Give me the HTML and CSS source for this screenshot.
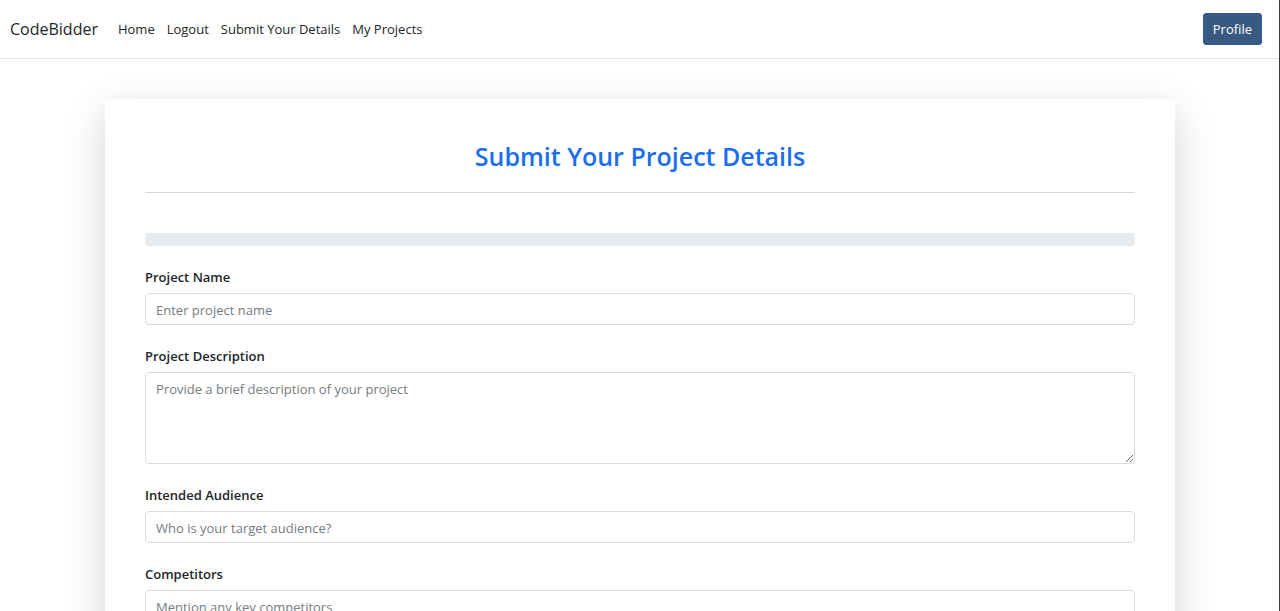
FILE: index.html
```html
<!DOCTYPE html>
<html lang="en">
<head>
<meta charset="utf-8">
<meta name="viewport" content="width=device-width, initial-scale=1">
<title>CodeBidder - Submit Your Project Details</title>
<link rel="stylesheet" href="styles.css">
</head>
<body>
<header class="navbar">
  <a class="brand" href="#">CodeBidder</a>
  <nav class="nav-links">
    <a href="#">Home</a>
    <a href="#">Logout</a>
    <a href="#">Submit Your Details</a>
    <a href="#">My Projects</a>
  </nav>
  <button class="profile-button" type="button">Profile</button>
</header>
<main class="page">
  <section class="card">
    <h1 class="title">Submit Your Project Details</h1>
    <div class="progress" role="progressbar" aria-label="Form progress" aria-valuenow="0" aria-valuemin="0" aria-valuemax="100"></div>
    <form class="form">
      <div class="field">
        <label for="name">Project Name</label>
        <input class="control" id="name" type="text" placeholder="Enter project name">
      </div>
      <div class="field">
        <label for="description">Project Description</label>
        <textarea class="control control-area" id="description" rows="4" placeholder="Provide a brief description of your project"></textarea>
      </div>
      <div class="field">
        <label for="audience">Intended Audience</label>
        <input class="control" id="audience" type="text" placeholder="Who is your target audience?">
      </div>
      <div class="field">
        <label for="competitors">Competitors</label>
        <input class="control" id="competitors" type="text" placeholder="Mention any key competitors">
      </div>
    </form>
  </section>
</main>
</body>
</html>
```
FILE: styles.css
```css
* { box-sizing: border-box; }

html { scrollbar-width: none; }

body {
  margin: 0;
  background: #fff;
  border-right: 1px solid #3c4043;
  color: #212529;
  font-family: "Segoe UI", "Open Sans", "Noto Sans", sans-serif;
  font-size: 13px;
  line-height: 20px;
}

.navbar {
  display: flex;
  align-items: center;
  gap: 20px;
  padding: 13px 17px 13px 10px;
  border-bottom: 1px solid #e4e5e6;
}

.navbar a { color: #212529; text-decoration: none; }

.navbar .brand { font-size: 16px; line-height: 24px; }

.nav-links { display: flex; gap: 12px; }

.profile-button {
  margin-left: auto;
  padding: 5px 9px;
  border: 1px solid #2a5caa;
  border-radius: 3px;
  background: #395a80;
  color: #fff;
  font: inherit;
}

.page { padding: 40px 104px 40px 105px; }

.card {
  padding: 40px;
  border-radius: 4px;
  background: #fff;
  box-shadow: 0 13px 40px rgba(0, 0, 0, 0.18);
}

.title {
  margin: 0 0 40px;
  padding-bottom: 18px;
  border-bottom: 1px solid #d6d8da;
  color: #1a6ef0;
  font-size: 25px;
  font-weight: 600;
  line-height: 35px;
  text-align: center;
}

.progress {
  height: 13px;
  margin-bottom: 21px;
  border-radius: 4px;
  background: #e8ebee;
}

.form { display: grid; gap: 21px; }

.field { display: grid; gap: 6px; }

.field label { font-weight: 600; }

.control {
  width: 100%;
  height: 32px;
  padding: 6px 10px 4px;
  border: 1px solid #d9dcdf;
  border-radius: 4px;
  background: #fff;
  color: #212529;
  font: inherit;
}

.control::placeholder { color: #757c83; opacity: 1; }

.control-area { height: 92px; resize: vertical; }
```
